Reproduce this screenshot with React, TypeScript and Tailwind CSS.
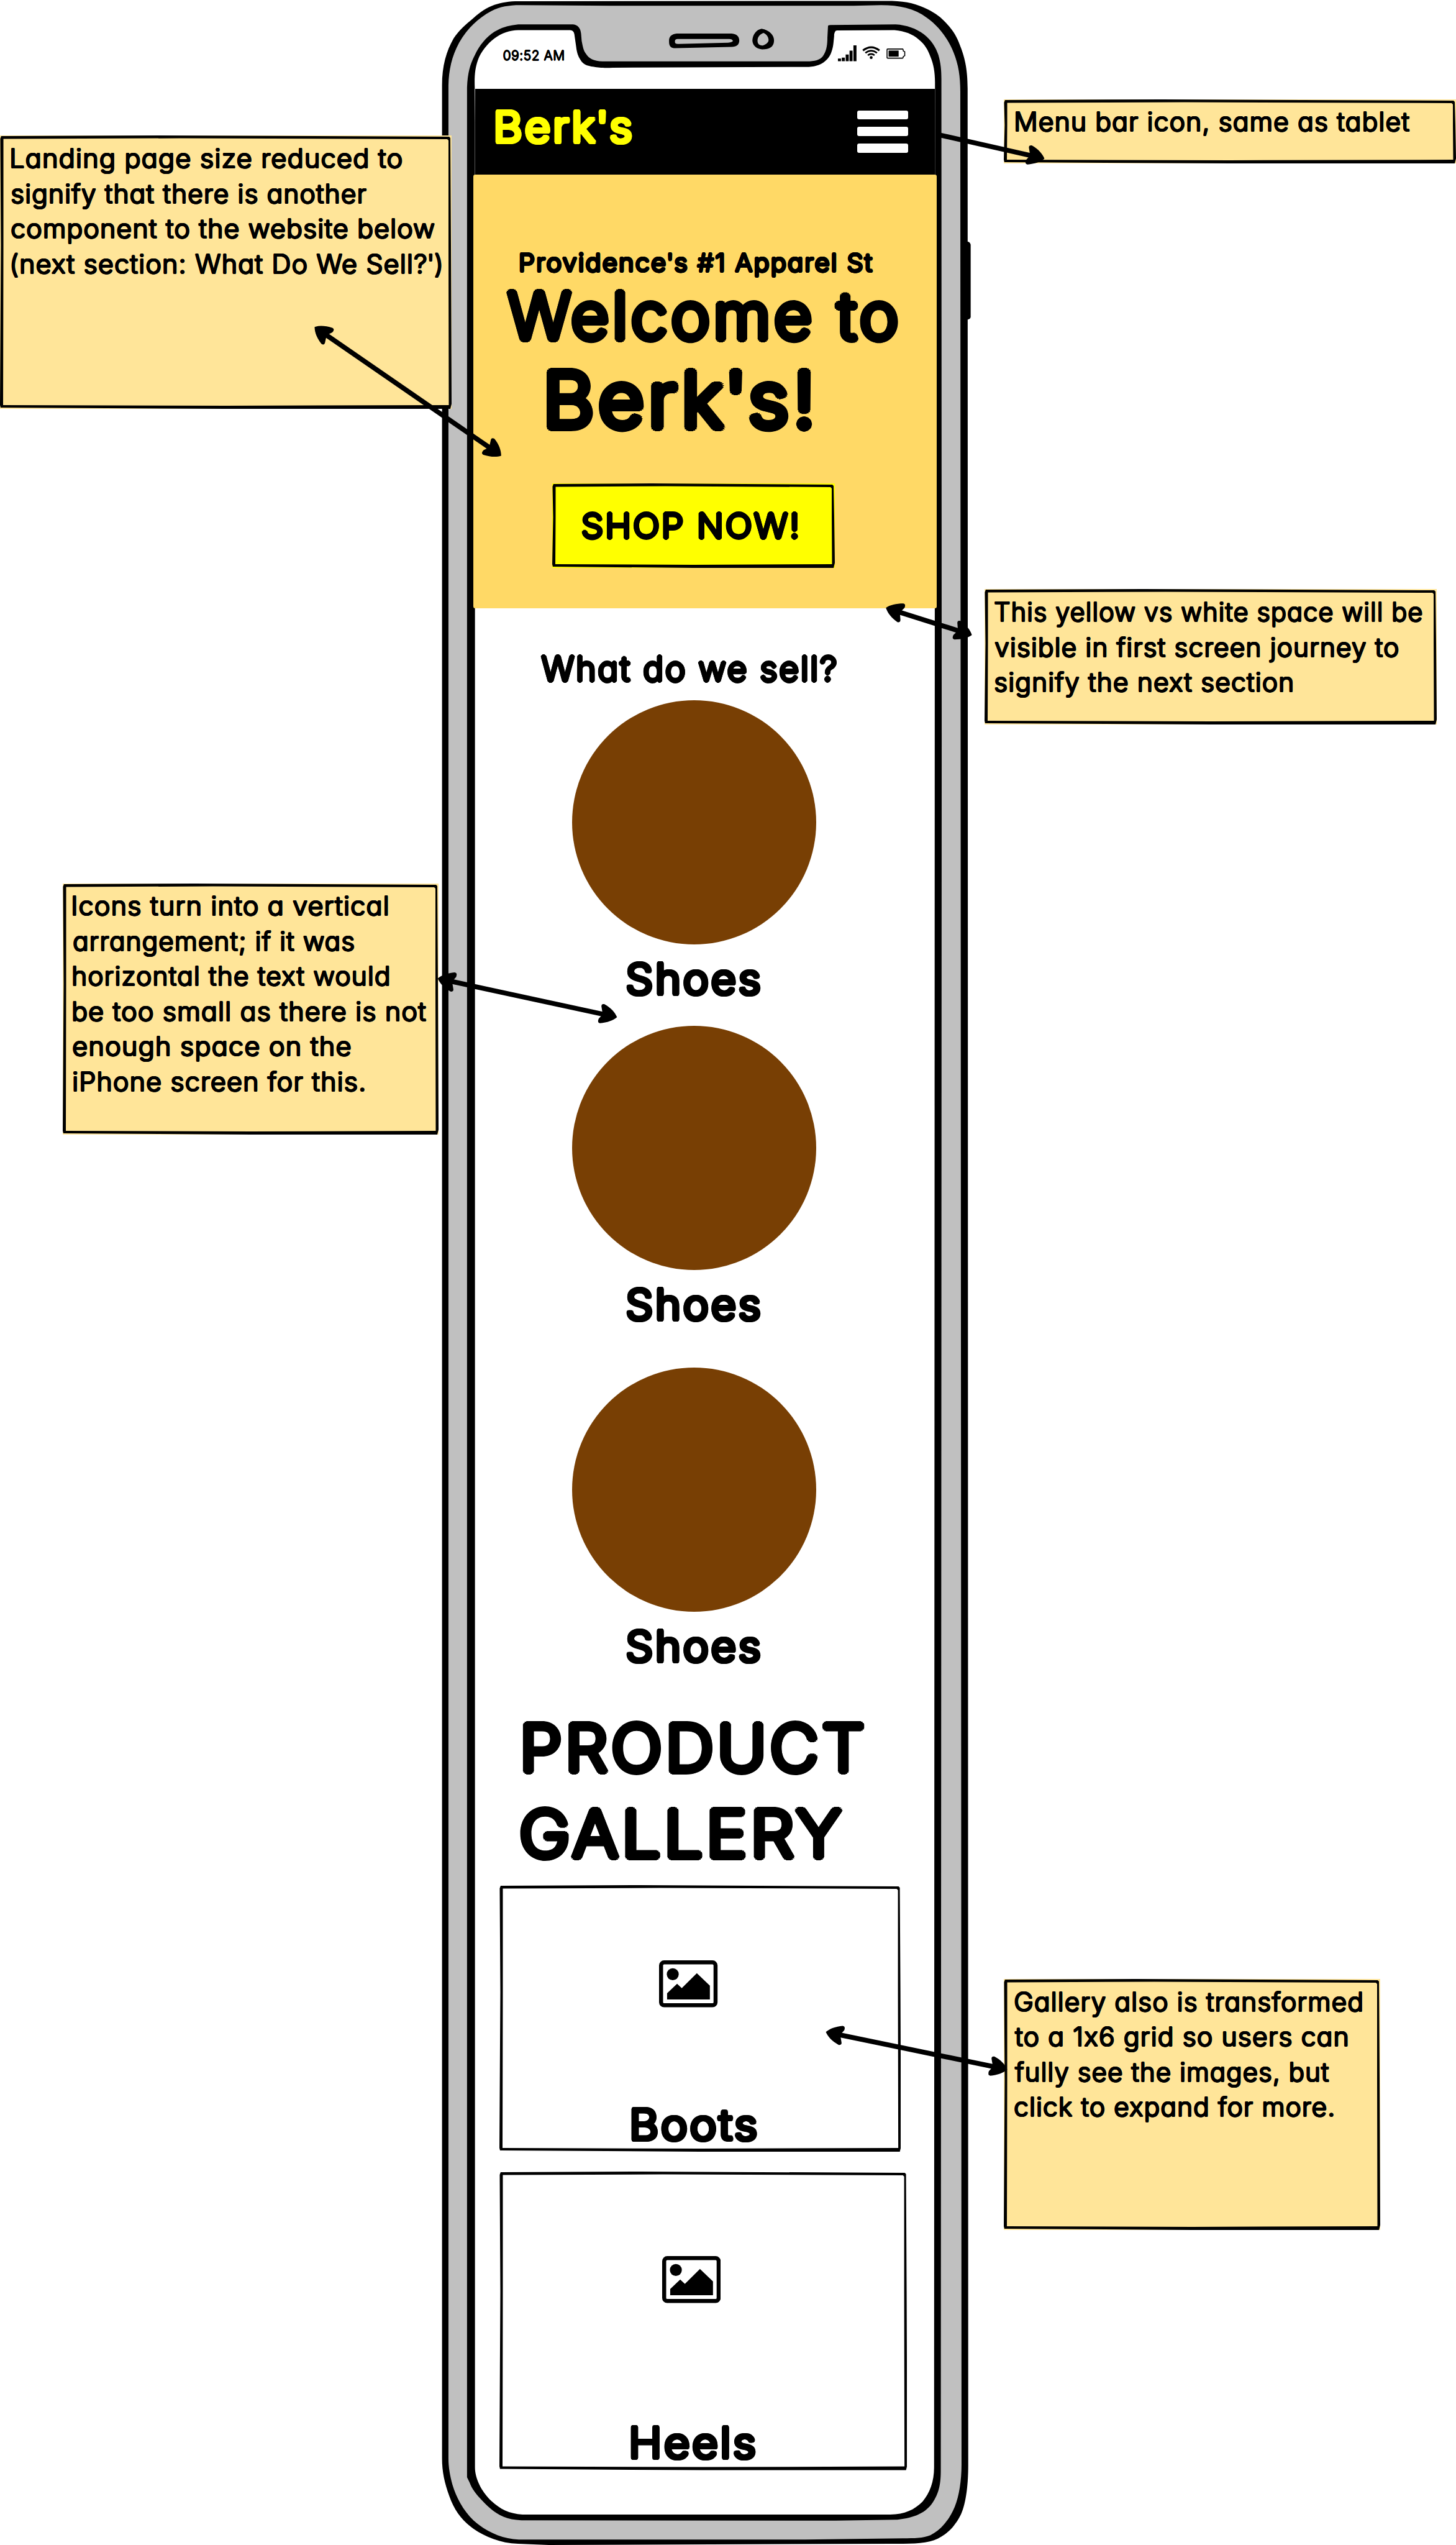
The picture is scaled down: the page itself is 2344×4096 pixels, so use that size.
import { Fragment, useLayoutEffect, useRef, useState } from "react";
import type { ReactNode } from "react";

/* Round-nibbed lettering: a light face thickened evenly in every direction. */
const PENS = {
  marker: {
    radius: 0.047,
    className:
      "font-light tracking-[0.05em] [text-shadow:0.047em_0_0,0.0407em_0.0235em_0,0.0235em_0.0407em_0,0_0.047em_0,-0.0235em_0.0407em_0,-0.0407em_0.0235em_0,-0.047em_0_0,-0.0407em_-0.0235em_0,-0.0235em_-0.0407em_0,0_-0.047em_0,0.0235em_-0.0407em_0,0.0407em_-0.0235em_0]",
  },
  fine: {
    radius: 0.027,
    className:
      "font-light tracking-[0.025em] [text-shadow:0.027em_0_0,0.019em_0.019em_0,0_0.027em_0,-0.019em_0.019em_0,-0.027em_0_0,-0.019em_-0.019em_0,0_-0.027em_0,0.019em_-0.019em_0]",
  },
};

/* One line of lettering, stretched so that its ink spans exactly `w` pixels. */
function Line({
  w,
  pen = "marker",
  className = "",
  children,
}: {
  w: number;
  pen?: keyof typeof PENS;
  className?: string;
  children: string;
}) {
  const ref = useRef<HTMLSpanElement>(null);
  const [fit, setFit] = useState({ scale: 1, shift: 0 });
  const { radius, className: penClass } = PENS[pen];
  useLayoutEffect(() => {
    const el = ref.current;
    const ctx = document.createElement("canvas").getContext("2d");
    if (!el || !ctx) return;
    const cs = getComputedStyle(el);
    ctx.font = `${cs.fontWeight} ${cs.fontSize} ${cs.fontFamily}`;
    const m = ctx.measureText(children);
    const nib = radius * parseFloat(cs.fontSize);
    const drift = el.offsetWidth - m.width - (parseFloat(cs.letterSpacing) || 0);
    const ink = m.actualBoundingBoxLeft + m.actualBoundingBoxRight + drift + nib * 2;
    const scale = w / ink;
    setFit({ scale, shift: (m.actualBoundingBoxLeft + nib) * scale });
  }, [children, w, radius]);
  return (
    <div className={`whitespace-nowrap ${className}`} style={{ width: w }}>
      <span
        ref={ref}
        className={`inline-block origin-left ${penClass}`}
        style={{ transform: `translateX(${fit.shift}px) scaleX(${fit.scale})` }}
      >
        {children.split("'").map((part, i) => (
          <Fragment key={i}>
            {i > 0 && <span className="-mx-[0.04em]">'</span>}
            {part}
          </Fragment>
        ))}
      </span>
    </div>
  );
}

/* Slightly uneven pen outline around a box. */
function Outline({ w, h }: { w: number; h: number }) {
  const outer = `M2 1 L${w * 0.35} 0 L${w - 4} 2 L${w - 2} 4 L${w - 1} ${h * 0.4} L${w} ${h - 8} L${w - 2} ${h} L${w * 0.5} ${h} L1 ${h - 2} L0 ${h - 6} L1.5 ${h * 0.4} L0.5 5 Z`;
  const inner = `M5.5 5.5 L${w * 0.4} 4.5 L${w - 7} 6 L${w - 5} 8 L${w - 5} ${h * 0.4} L${w - 4.5} ${h - 6} L${w * 0.5} ${h - 5} L5 ${h - 6} L5.5 ${h * 0.4} Z`;
  return (
    <svg className="absolute inset-0 size-full" viewBox={`0 0 ${w} ${h}`} preserveAspectRatio="none">
      <path d={`${outer} ${inner}`} fillRule="evenodd" />
    </svg>
  );
}

function Note({ w, h, lines, className }: { w: number; h: number; lines: [string, number][]; className: string }) {
  return (
    <div className={`absolute bg-[#ffe599] ${className}`} style={{ width: w, height: h }}>
      <Outline w={w} h={h} />
      <div className="relative flex flex-col text-[42.200px] leading-[56.500px]">
        {lines.map(([text, width]) => (
          <Line key={text} w={width} pen="fine">
            {text}
          </Line>
        ))}
      </div>
    </div>
  );
}

function PictureIcon({ className }: { className: string }) {
  return (
    <svg className={`h-[75.6px] w-[94.2px] shrink-0 ${className}`} viewBox="0 0 96 77">
      <rect x="3.3" y="3.3" width="89.4" height="70.4" rx="5" fill="none" stroke="#000" strokeWidth="6.6" />
      <circle cx="22.5" cy="22.8" r="9.8" />
      <path d="M13.2 54 L29.6 38.4 L37.3 45.6 L62 21 L83.4 41.4 V64.2 H13.2 Z" />
    </svg>
  );
}

function Category({ className = "" }: { className?: string }) {
  return (
    <div className={className}>
      <div className="ml-[156px] size-[392.5px] rounded-full bg-[#783f04]" />
      <Line w={217} className="ml-[243px] text-[68px] leading-[110px]">
        Shoes
      </Line>
    </div>
  );
}

function Card({ w, h, className, children }: { w: number; h: number; className: string; children: ReactNode }) {
  return (
    <div className={`relative ml-[38.6px] flex shrink-0 flex-col ${className}`} style={{ width: w, height: h }}>
      <Outline w={w} h={h} />
      {children}
    </div>
  );
}

function PhoneFrame() {
  return (
    <svg className="absolute inset-0 size-full" viewBox="0 0 2388 4172" preserveAspectRatio="none">
      <path d="M1578 398 Q1590 393 1592 401 L1592 520 Q1590 526 1578 523 Z" />
      <path
        d="M725 140 C725 108 732 84 744 63 C753 49 764 40 776 30 C788 20 797 13 811 8 C823 4 835 2 851 2 L1463 1.5 C1487 2 1505 7 1521 15 C1535 22 1544 29 1551 37 C1564 50 1570 62 1574 73 C1582 93 1587 112 1587 145 L1588 4040 C1588 4080 1583 4108 1575 4124 C1566 4142 1551 4157 1532 4164 C1514 4170 1490 4170 1460 4170 L900 4172 L850 4170 C820 4169 795 4158 776 4145 C758 4132 745 4115 737 4092 C729 4070 725 4052 725 4030 Z"
      />
      <path
        d="M735.5 140 C736 115 741 92 753 70 C765 49 783 30 806 18 C820 11 835 8.500 853 8.500 L1000 9.500 L1400 9.500 L1445 8.500 C1475 8.500 1500 14 1520 29 C1540 43 1556 65 1564 86 C1572 106 1575 125 1575 150 L1577 4040 C1577 4066 1573 4092 1566 4109 C1557 4130 1545 4146 1526 4156 C1514 4161 1500 4161 1480 4161 L1320 4163 L851 4163 C822 4162 796 4149 777 4132 C759 4115 748 4093 742 4073 C738 4058 735.500 4045 735.500 4030 Z"
        fill="#c0c0c0"
      />
      <path
        d="M766 143 C767 120 771 105 779 90 C786 75 797 61 811 52 C823 45 834 42 843 41 L850 40 L940 40 C948 41 952 46 953 55 L954 67 C956 77 957 83 961 88 C966 96 974 100 988 100.500 L1328 100.500 C1340 100 1347 97 1351 90 C1356 82 1357 72 1357 62 L1358 43 Q1358 41 1362 41 L1469 40 C1487 41 1503 47 1515 56 C1528 66 1535 78 1539 90 C1543 104 1544 115 1544 130 L1544.500 1200 L1543 4050 C1543 4075 1539 4088 1530 4102 C1518 4120 1500 4127 1472 4130.500 L1370 4132 L855 4131.500 C832 4131 817 4123 804 4112 C786 4095 775 4083 770 4069 L766 4061 Z"
      />
      <path
        d="M779 200 L778.600 143 C778 125 779 112 784 98 C789 85 799 72 811 63 C823 54 836 50 850 49.500 L935 49.500 Q941 50 942 56 L945 77 C946 86 948 92 952 98 C956 105 962 108 974 109.500 C982 111 990 111.500 1005 111 L1322 109.700 C1335 109.500 1344 107 1351 102 C1358 97 1362 91 1364 84 C1367 76 1367 69 1368 60 Q1368 50 1373 50 L1467 49.500 C1484 51 1497 56 1507 65 C1517 73 1522 82 1526 93 C1531 105 1533.500 118 1533.500 135 L1532 4045 C1532 4068 1525 4087 1513 4101 C1500 4114 1484 4122 1460 4122 L857 4122 C835 4121 820 4113 806 4100 C789 4084 779 4062 779 4045 Z"
        fill="#fff"
      />
      <path
        fillRule="evenodd"
        d="M1110 55 H1200 C1209 56 1212.500 60 1212.500 67 C1212 74 1208 76.500 1200 77 L1108 79 C1100 79 1097.300 76 1097.300 68 C1097 60 1101 56 1110 55 Z M1113 64 C1107 64 1107 66 1107 69 Q1107 72 1112 72 L1194 70 Q1202 69 1202 67 Q1201 64 1196 64 Z"
      />
      <path
        fillRule="evenodd"
        d="M1249 47 C1262 49 1270 58 1269.500 67 C1269 77 1262 81 1250 81 C1239 80 1234 73 1234 66 C1235 56 1240 49 1249 47 Z M1252 54 C1245 57 1242 62 1242.500 68 C1243 73 1247 75 1251 74.500 C1257 73 1261 69 1260.500 65 C1260 60 1257 56 1252 54 Z"
      />
    </svg>
  );
}

function Head({ x, y, angle }: { x: number; y: number; angle: number }) {
  return (
    <path
      transform={`translate(${x} ${y}) rotate(${angle})`}
      d="M0 0 C-5 -7 -13 -13 -25 -16.500 Q-31 -16 -28 -10 L-24 0 L-29 9 Q-30 16 -25 15.500 C-14 12 -5 7 0 0 Z"
    />
  );
}

function Arrow({ from, to, both = true }: { from: [number, number]; to: [number, number]; both?: boolean }) {
  const dx = to[0] - from[0];
  const dy = to[1] - from[1];
  const angle = (Math.atan2(dy, dx) * 180) / Math.PI;
  const len = Math.hypot(dx, dy);
  const ux = (dx / len) * 14;
  const uy = (dy / len) * 14;
  return (
    <g>
      <line
        x1={from[0] + (both ? ux : 0)}
        y1={from[1] + (both ? uy : 0)}
        x2={to[0] - ux}
        y2={to[1] - uy}
        stroke="#000"
        strokeWidth="8"
      />
      <Head x={to[0]} y={to[1]} angle={angle} />
      {both && <Head x={from[0]} y={from[1]} angle={angle + 180} />}
    </g>
  );
}

function StatusIcons() {
  return (
    <svg className="mt-[71.7px] h-[27.5px] w-[110px]" viewBox="1373 73 112 28">
      <path d="M1374 95.700h5v4.300h-5z M1380.300 94h5v6h-5z M1386.700 89h5v11h-5z M1393 82.700h5v17.300h-5z M1399.400 74h5v26h-5z" />
      <g fill="none" stroke="#000" strokeWidth="2.800">
        <path d="M1415 82.500 Q1428.500 72 1442 82.500" strokeWidth="3.200" />
        <path d="M1419 86.500 Q1428.500 79 1438 86.500" />
        <path d="M1423 90.300 Q1428.500 86 1434 90.300" />
      </g>
      <circle cx="1428.500" cy="94" r="2.400" />
      <path
        d="M1455.500 80 H1480 Q1481 80 1481 83 L1483.500 84.500 V91 L1481 92.500 Q1481 95 1479.500 95 H1455.500 Q1454.500 95 1454.500 94 V81 Q1454.500 80 1455.500 80 Z"
        fill="none"
        stroke="#000"
        strokeWidth="1.600"
      />
      <rect x="1457" y="82.500" width="16.500" height="10" />
    </svg>
  );
}

export default function App() {
  return (
    <div className="relative h-[4096px] w-[2344px] overflow-hidden bg-white font-['Inter','Liberation_Sans',sans-serif] text-black [font-feature-settings:'cv11','calt'_0]">
      <PhoneFrame />

      <main className="relative ml-[765px] flex w-[740px] flex-col">
        <div className="flex h-[143px] items-start justify-between pr-[47px] pl-[45px]">
          <Line w={98} pen="fine" className="mt-[72px] text-[21.500px] leading-[34px]">
            09:52 AM
          </Line>
          <StatusIcons />
        </div>

        <header className="flex h-[137.500px] items-center justify-between bg-black pr-[43px] pl-[31.600px]">
          <Line w={221} className="mb-4 text-[69px] leading-[90px] text-[#ffff00]">
            Berk's
          </Line>
          <div className="flex w-[82px] flex-col gap-[12px]">
            <div className="h-[14.800px] rounded-[3px] bg-white" />
            <div className="h-[14.800px] rounded-[3px] bg-white" />
            <div className="h-[14.800px] rounded-[3px] bg-white" />
          </div>
        </header>

        <section className="-mx-[3px] mt-[0.500px] h-[698px] rounded-[3px] bg-[#ffd966] pt-[118.600px]">
          <Line w={570} className="ml-[74px] text-[40px] leading-[46px]">
            Providence's #1 Apparel St
          </Line>
          <Line w={632} className="ml-[52px] text-[104px] leading-[124.800px]">
            Welcome to
          </Line>
          <Line w={428} className="ml-[116.500px] text-[124px] leading-[147.200px]">
            Berk's!
          </Line>
          <button className="relative mt-[60.400px] ml-[127px] flex h-[136px] w-[455px] items-center bg-[#ffff00] pl-[47px]">
            <Outline w={455} h={136} />
            <Line w={349} className="text-left text-[55px] leading-[80px]">
              SHOP NOW!
            </Line>
          </button>
        </section>

        <section className="pt-[46.500px]">
          <Line w={477} className="ml-[104.500px] text-[55px] leading-[100px]">
            What do we sell?
          </Line>
          <Category className="mt-[1.800px]" />
          <Category className="mt-[21.600px]" />
          <Category className="mt-[47.200px]" />
        </section>

        <section className="mt-[40.700px] flex flex-col">
          <Line w={550} className="ml-[77px] text-[104px] leading-[138px]">
            PRODUCT
          </Line>
          <Line w={520} className="ml-[71.500px] text-[104px] leading-[138px]">
            GALLERY
          </Line>
          <Card w={646.6} h={429} className="mt-[13.400px]">
            <PictureIcon className="mt-[121.700px] ml-[257.900px]" />
            <Line w={204} className="mt-[142.700px] ml-[212.300px] text-[68px] leading-[90px]">
              Boots
            </Line>
          </Card>
          <Card w={656.6} h={480.6} className="mt-[32.400px]">
            <PictureIcon className="mt-[136px] ml-[262px]" />
            <Line w={202} className="mt-[179.400px] ml-[211.400px] text-[68px] leading-[90px]">
              Heels
            </Line>
          </Card>
        </section>
      </main>

      <Note
        w={727}
        h={440}
        className="top-[218px] left-0 pt-[9px] pl-[17.500px]"
        lines={[
          ["Landing page size reduced to", 629],
          ["signify that there is another", 573],
          ["component to the website below", 682],
          ["(next section: What Do We Sell?')", 693],
        ]}
      />
      <Note
        w={728}
        h={103}
        className="top-[159.700px] left-[1615.700px] pt-[8px] pl-[19.500px]"
        lines={[["Menu bar icon, same as tablet", 635]]}
      />
      <Note
        w={728}
        h={218}
        className="top-[948.200px] left-[1584.700px] pt-[9px] pl-[16px]"
        lines={[
          ["This yellow vs white space will be", 689],
          ["visible in first screen journey to", 650],
          ["signify the next section", 481],
        ]}
      />
      <Note
        w={605}
        h={404}
        className="top-[1421.900px] left-[100.800px] pt-[8.500px] pl-[16.500px]"
        lines={[
          ["Icons turn into a vertical", 507.5],
          ["arrangement; if it was", 453.5],
          ["horizontal the text would", 509.5],
          ["be too small as there is not", 570],
          ["enough space on the", 448],
          ["iPhone screen for this.", 471],
        ]}
      />
      <Note
        w={606}
        h={404}
        className="top-[3185px] left-[1616.200px] pt-[8.500px] pl-[17px]"
        lines={[
          ["Gallery also is transformed", 560],
          ["to a 1x6 grid so users can", 537.5],
          ["fully see the images, but", 507.500],
          ["click to expand for more.", 514],
        ]}
      />

      <svg className="absolute inset-0 size-full" viewBox="0 0 2388 4172" preserveAspectRatio="none">
        <Arrow from={[516, 536]} to={[822, 747]} />
        <Arrow from={[1540, 221]} to={[1713, 260]} both={false} />
        <Arrow from={[1453, 996.5]} to={[1594, 1041]} />
        <Arrow from={[718, 1604]} to={[1012, 1667.5]} />
        <Arrow from={[1354.5, 3331]} to={[1652, 3392.5]} />
      </svg>
    </div>
  );
}
